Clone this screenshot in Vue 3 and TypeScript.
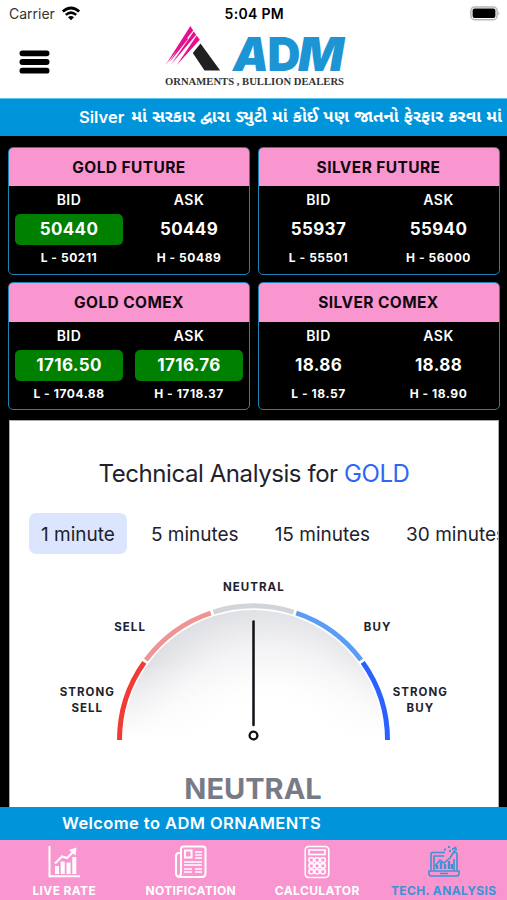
<script setup lang="ts">
interface Quote {
  name: string
  bid: string
  ask: string
  low: string
  high: string
  bidUp?: boolean
  askUp?: boolean
}

const quotes: Quote[] = [
  { name: 'GOLD FUTURE', bid: '50440', ask: '50449', low: '50211', high: '50489', bidUp: true },
  { name: 'SILVER FUTURE', bid: '55937', ask: '55940', low: '55501', high: '56000' },
  { name: 'GOLD COMEX', bid: '1716.50', ask: '1716.76', low: '1704.88', high: '1718.37', bidUp: true, askUp: true },
  { name: 'SILVER COMEX', bid: '18.86', ask: '18.88', low: '18.57', high: '18.90' },
]

const intervals = ['1 minute', '5 minutes', '15 minutes', '30 minutes']

const colors = ['#f23b35', '#ef9495', '#d1d4d9', '#5b9cf6', '#2962ff']

function point(deg: number): string {
  const a = (deg * Math.PI) / 180
  return `${(213.5 - 134 * Math.cos(a)).toFixed(2)} ${(170 - 134 * Math.sin(a)).toFixed(2)}`
}

const arcs = colors.map((color, i) => {
  const from = i * 36 + (i === 0 ? 0 : 0.6)
  const to = (i + 1) * 36 - (i === 4 ? 0 : 0.6)
  return { color, d: `M${point(from)}A134 134 0 0 1 ${point(to)}` }
})
</script>

<template>
  <div class="screen">
    <div class="status">
      <div class="carrier">
        <span>Carrier</span>
        <svg width="20" height="15" viewBox="0 0 20 15">
          <path d="M1.8 5.6Q10-1.6 18.2 5.6" fill="none" stroke="#000" stroke-width="2.7" />
          <path d="M4.8 8.9Q10 4.4 15.2 8.9" fill="none" stroke="#000" stroke-width="2.5" />
          <path d="M7 11.2Q10 8.8 13 11.2L10 14.3Z" />
        </svg>
      </div>
      <span class="clock">5:04 PM</span>
      <svg class="battery" width="31" height="15" viewBox="0 0 31 15">
        <rect x=".9" y=".9" width="26.2" height="12.8" rx="4" fill="#fff" stroke="#b5b5b5" stroke-width="1.5" />
        <rect x="2.6" y="2.6" width="22.8" height="9.4" rx="2" />
        <path d="M28.4 5.2Q30.6 7.3 28.4 9.4Z" fill="#b5b5b5" />
      </svg>
    </div>

    <header class="header">
      <svg class="burger" width="34" height="28" viewBox="0 0 34 28">
        <path d="M4.4 4.3H28.6M4.4 13H28.6M4.4 21.7H28.6" stroke="#000" stroke-width="5.8" stroke-linecap="round" />
      </svg>
      <svg class="logo" width="184" height="66" viewBox="0 0 184 66">
        <g fill="#e5108c">
          <path d="M27.4 0L2.5 39L30.2 4.6Z" />
          <path d="M30.7 5.4L8 38.5L33.2 8.8Z" />
          <path d="M33.7 9.6L13.8 39L36.8 13.8Z" />
          <path d="M23 10L6 37L25 13Z" />
        </g>
        <path d="M37.5 17.5L57.2 44.6H41.5L29.8 27Z" fill="#202020" />
        <g class="brand">
          <text class="slant" x="70" y="45" textLength="36" lengthAdjust="spacingAndGlyphs">A</text>
          <text x="104.5" y="45" textLength="33" lengthAdjust="spacingAndGlyphs">D</text>
          <text class="slant" x="135" y="45" textLength="46" lengthAdjust="spacingAndGlyphs">M</text>
        </g>
        <text class="tagline" x="2" y="58.7" textLength="179" lengthAdjust="spacingAndGlyphs">ORNAMENTS , BULLION DEALERS</text>
      </svg>
    </header>

    <div class="ticker"><span>Silver</span><span class="gujarati">માં સરકાર દ્વારા ડ્યુટી માં કોઈ પણ જાતનો ફેરફાર કરવા માં</span></div>

    <main class="content">
      <section class="quotes">
        <article v-for="q in quotes" :key="q.name" class="card">
          <h2>{{ q.name }}</h2>
          <div class="cols">
            <div class="col">
              <span class="side">BID</span>
              <span class="price" :class="{ up: q.bidUp }">{{ q.bid }}</span>
              <span class="range">L - {{ q.low }}</span>
            </div>
            <div class="col">
              <span class="side">ASK</span>
              <span class="price" :class="{ up: q.askUp }">{{ q.ask }}</span>
              <span class="range">H - {{ q.high }}</span>
            </div>
          </div>
        </article>
      </section>

      <section class="analysis">
        <h1>Technical Analysis for <span>GOLD</span></h1>
        <div class="tabs">
          <button v-for="(t, i) in intervals" :key="t" class="tab" :class="{ active: i === 0 }">{{ t }}</button>
        </div>
        <svg class="gauge" width="427" height="180" viewBox="0 0 427 180">
          <defs>
            <radialGradient id="shade" gradientUnits="userSpaceOnUse" cx="228" cy="191" r="160">
              <stop offset=".4" stop-color="#fff" />
              <stop offset=".7" stop-color="#f4f4f6" />
              <stop offset="1" stop-color="#dcdde1" />
            </radialGradient>
            <linearGradient id="fade" x1="0" y1="0" x2="0" y2="1">
              <stop offset=".4" stop-color="#fff" stop-opacity="0" />
              <stop offset="1" stop-color="#fff" />
            </linearGradient>
          </defs>
          <path d="M83.5 170A130 130 0 0 1 343.5 170Z" fill="url(#shade)" />
          <path d="M83.5 170A130 130 0 0 1 343.5 170Z" fill="url(#fade)" />
          <path v-for="a in arcs" :key="a.color" :d="a.d" fill="none" :stroke="a.color" stroke-width="5" />
          <path d="M213.5 51.5V155" stroke="#0f1115" stroke-width="2.5" stroke-linecap="round" />
          <circle cx="213.5" cy="165.5" r="3.9" fill="#fff" stroke="#0f1115" stroke-width="2.3" />
          <g class="labels">
            <text x="213.8" y="21">NEUTRAL</text>
            <text x="90.1" y="61">SELL</text>
            <text x="337.6" y="61">BUY</text>
            <text x="47.3" y="126">STRONG</text>
            <text x="47.3" y="141.5">SELL</text>
            <text x="380.3" y="126">STRONG</text>
            <text x="380.3" y="141.5">BUY</text>
          </g>
        </svg>
        <div class="verdict">NEUTRAL</div>
      </section>
    </main>

    <div class="welcome">Welcome to ADM ORNAMENTS</div>

    <nav class="nav">
      <a class="item">
        <svg width="34" height="34" viewBox="0 0 34 34" fill="none" stroke="currentColor">
          <path d="M2.5 1V31.2H33" stroke-width="2" />
          <path d="M8 18.5L15 11.5L20 13L27.5 5.5" stroke-width="2" />
          <path d="M22 5L29.5 2.5L28.5 10.5Z" fill="currentColor" stroke="none" />
          <path d="M10 21V29M15.7 16.5V29M21.5 17.5V29M27.3 12V29" stroke-width="4" />
        </svg>
        <span>LIVE RATE</span>
      </a>
      <a class="item">
        <svg width="34" height="34" viewBox="0 0 34 34" fill="none" stroke="currentColor">
          <path d="M7 8H5Q2 8 2 11V28Q2 32 6 32H28Q31.5 32 31.5 28V4Q31.5 1.5 29 1.5H9.5Q7 1.5 7 4V28Q7 31 4.5 31.5" stroke-width="2" />
          <rect x="11" y="5.5" width="6.5" height="7" stroke-width="2" />
          <path d="M21 7H28M21 10H28M21 13H28M10 17H28M10 20H28M10 24H18M21 24H28M10 27H18M21 27H28" stroke-width="1.3" />
        </svg>
        <span>NOTIFICATION</span>
      </a>
      <a class="item">
        <svg width="34" height="34" viewBox="0 0 34 34" fill="none" stroke="currentColor" stroke-width="1.6">
          <rect x="5.2" y="1.5" width="23.6" height="31" rx="3.5" />
          <rect x="9" y="5" width="16" height="4.5" />
          <g v-for="y in [12.8, 18.6, 24.4]" :key="y">
            <rect v-for="x in [9, 14.8, 20.6]" :key="x" :x="x" :y="y" width="4.6" height="4.4" rx="1.5" />
          </g>
        </svg>
        <span>CALCULATOR</span>
      </a>
      <a class="item tech">
        <svg width="34" height="34" viewBox="0 0 34 34" fill="none" stroke="currentColor" stroke-width="1.6">
          <path d="M18 7.5H5.5Q4 7.5 4 9V25.5M30 12V25.5M27 7.5H28.5Q30 7.5 30 9V12" />
          <path d="M7 25V11H17M27 14V25" />
          <path d="M2 26H32V28.5Q32 31 29.5 31H4.5Q2 31 2 28.5ZM13 28.5H21" />
          <path d="M8 21L13 15L17 18L23 13L28 5M26 4L28.5 2.5L29.5 5.5" />
          <path d="M10 24V20M14 24V17M18 24V19M22 24V16M25 24V19" stroke-width="2.4" />
          <path d="M17 4.5H19M21 2H23M25 4H26M22 6H24" stroke-width="2" />
        </svg>
        <span>TECH. ANALYSIS</span>
      </a>
    </nav>
  </div>
</template>

<style>
body {
  margin: 0;
  overflow: hidden;
}
</style>

<style scoped>
.screen {
  width: 507px;
  height: 900px;
  display: flex;
  flex-direction: column;
  background: #fff;
  font-family: Inter, "Noto Sans Gujarati", "Noto Sans", sans-serif;
  overflow: hidden;
}
.status {
  height: 26px;
  flex: none;
  box-sizing: border-box;
  padding: 0 6px 0 9px;
  display: grid;
  grid-template-columns: 1fr auto 1fr;
  align-items: center;
  font-size: 14px;
}
.carrier {
  display: flex;
  align-items: center;
  gap: 6px;
  color: #333;
  padding-top: 1px;
}
.clock {
  font-weight: 600;
  letter-spacing: 0.3px;
  margin-right: 1.5px;
  padding-top: 1px;
}
.battery {
  justify-self: end;
}
.header {
  height: 72px;
  flex: none;
  display: flex;
}
.burger {
  flex: none;
  margin: 23px 0 0 18px;
}
.logo {
  flex: none;
  margin-left: 111px;
}
.brand {
  fill: #1d94d3;
  font-size: 46.5px;
  font-weight: 900;
}
.slant {
  font-style: italic;
}
.tagline {
  font: bold 9.5px "Liberation Serif", serif;
  fill: #333;
}
.ticker {
  height: 37.5px;
  flex: none;
  box-sizing: border-box;
  border-top: 1px solid #5ac3eb;
  background: #0095db;
  color: #fff;
  display: flex;
  align-items: center;
  padding-left: 79px;
  font-size: 16.5px;
  font-weight: 600;
  white-space: nowrap;
}
.gujarati {
  margin-left: 7px;
  font-size: 17px;
  font-weight: 700;
  word-spacing: 1px;
}
.content {
  flex: 1;
  min-height: 0;
  background: #000;
  padding: 11px 8px 0;
  display: flex;
  flex-direction: column;
  overflow: hidden;
}
.quotes {
  display: grid;
  grid-template-columns: 242px 242px;
  grid-auto-rows: 128px;
  gap: 7.5px;
  flex: none;
}
.card {
  border: 1px solid #1a84b5;
  border-radius: 5px;
  overflow: hidden;
  color: #fff;
}
.card h2 {
  margin: 0;
  height: 38.5px;
  line-height: 40px;
  background: #f996d0;
  color: #100810;
  text-align: center;
  font-size: 15.5px;
  font-weight: 700;
  letter-spacing: 0.4px;
}
.cols {
  display: grid;
  grid-template-columns: 1fr 1fr;
  gap: 12px;
  padding: 0 6px;
}
.col {
  display: flex;
  flex-direction: column;
  align-items: center;
  font-weight: 600;
}
.side {
  height: 28px;
  line-height: 28px;
  font-size: 14px;
  letter-spacing: 0.5px;
}
.price {
  width: 100%;
  height: 31px;
  line-height: 30px;
  border-radius: 5px;
  text-align: center;
  font-size: 17px;
  font-weight: 700;
  letter-spacing: 0.35px;
}
.price.up {
  background: #008000;
}
.range {
  line-height: 25px;
  font-size: 12px;
  font-weight: 700;
  letter-spacing: 0.55px;
}
.analysis {
  margin: 9.5px 0 0 1px;
  width: 490px;
  flex: 1;
  background: #fff;
  border: 1px solid #aaa;
  border-bottom: 0;
  box-sizing: border-box;
  overflow: hidden;
  display: flex;
  flex-direction: column;
  align-items: center;
  color: #1e222d;
}
.analysis h1 {
  margin: 36px 0 22px;
  line-height: 34px;
  font-size: 24px;
  font-weight: 400;
  letter-spacing: -0.43px;
  white-space: nowrap;
}
.analysis h1 span {
  color: #2f66f5;
}
.tabs {
  width: 100%;
  box-sizing: border-box;
  padding-left: 19px;
  display: flex;
  flex: none;
  gap: 12px;
}
.tab {
  flex: none;
  height: 41px;
  padding: 2px 12px 0;
  border: 0;
  border-radius: 7px;
  background: none;
  color: #1e222d;
  font: 400 19px Inter, sans-serif;
}
.tab.active {
  background: #dbe6fe;
}
.gauge {
  flex: none;
  margin: 16px 2px 0 0;
}
.labels {
  font-size: 11.5px;
  font-weight: 700;
  letter-spacing: 1.05px;
  text-anchor: middle;
  fill: #1e222d;
}
.verdict {
  margin: 21px 2px 0 0;
  line-height: 36px;
  font-size: 29px;
  font-weight: 700;
  color: #787b86;
}
.welcome {
  height: 33px;
  flex: none;
  line-height: 33px;
  padding-left: 62px;
  background: #0095db;
  color: #fff;
  font-size: 16.5px;
  font-weight: 600;
  letter-spacing: 0.42px;
}
.nav {
  height: 60px;
  flex: none;
  background: #f996d0;
  display: grid;
  grid-template-columns: repeat(4, 1fr);
  padding-left: 1px;
  box-sizing: border-box;
}
.item {
  display: flex;
  flex-direction: column;
  align-items: center;
  padding-top: 5px;
  gap: 4px;
  color: #fff;
  font-size: 12px;
  font-weight: 700;
  letter-spacing: 0.38px;
  line-height: 15px;
  white-space: nowrap;
}
.item.tech {
  color: #3e92d3;
}
</style>
